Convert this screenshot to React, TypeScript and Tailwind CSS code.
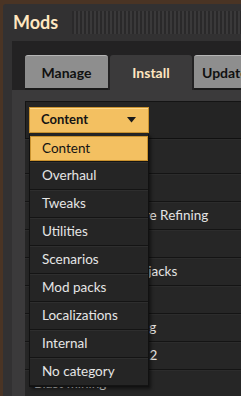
import React from "react";

const K_CATEGORIES = [
  "Content",
  "Overhaul",
  "Tweaks",
  "Utilities",
  "Scenarios",
  "Mod packs",
  "Localizations",
  "Internal",
  "No category",
];

const K_MODS = [
  { name: "Alien Biomes", h: "h-[35px]" },
  { name: "AAI Loaders", h: "h-[28px]" },
  { name: "Angel's Ultimate Ore Refining", h: "h-[28px]" },
  { name: "Bottleneck", h: "h-[28px]" },
  { name: "Bob's Mining Pumpjacks", h: "h-[28px]" },
  { name: "Cursed filters", h: "h-[28px]" },
  { name: "Angel's Deep Mining", h: "h-[28px]" },
  { name: "Space Explorations 2", h: "h-[28px]" },
  { name: "Blast mining", h: "h-[28px]" },
];

function Tab({ label, active, wide }: { label: string; active?: boolean; wide?: boolean }) {
  if (active) {
    return (
      <div className="w-[82px] h-[35px] shrink-0 bg-[#3b3a3b] rounded-t-[3px] flex items-center justify-center pb-[1px] text-[14px] font-bold text-[#ffe6c0]">
        {label}
      </div>
    );
  }
  return (
    <div
      className={`${wide ? "w-[90px] justify-start pl-[8px]" : "w-[83px] justify-center"} h-[33px] shrink-0 bg-[#8e8e8e] rounded-t-[3px] border-t border-[#b5b5b5] shadow-[0_2px_0_#1a1a1a] flex items-center text-[14px] font-bold text-[#111111] whitespace-nowrap`}
    >
      {label}
    </div>
  );
}

export default function App() {
  return (
    <div className="w-[241px] h-[396px] overflow-hidden bg-[#4a3424] pt-[4px] pl-[3px] font-['Lato',sans-serif]">
      <div className="w-[300px] h-full bg-[#323132] rounded-tl-[3px] flex flex-col">
        {/* title bar */}
        <div className="h-[37px] shrink-0 flex items-center pl-[10px] pb-[1px]">
          <span className="text-[18px] leading-none font-bold text-[#ffe6c0]">Mods</span>
          <div className="ml-[14px] flex-1 h-[23px] bg-[repeating-linear-gradient(90deg,#2a292a_0px,#2a292a_2px,#3a393a_2px,#3a393a_4px)]" />
        </div>

        {/* inner frame */}
        <div className="ml-[9px] flex-1 bg-[#232223] flex flex-col">
          <div className="pt-[14px] pl-[13px] flex gap-[2px] items-start">
            <Tab label="Manage" />
            <Tab label="Install" active />
            <Tab label="Updates" wide />
          </div>

          <div className="flex-1 bg-[#3b3a3b] pt-[11px] pl-[13px]">
            <div className="relative h-full bg-[#242424] shadow-[inset_1px_1px_0_#141414]">
              <div className="h-[38px] border-b border-[#101010] pl-[4px] pt-[6px]">
                <div className="w-[120px] h-[26px] bg-[#f3c061] border border-[#c9922f] shadow-[inset_0_1px_0_#ffd98c] flex items-center pl-[11px] pr-[12px] text-[13px] font-bold text-[#141414]">
                  <span className="flex-1">Content</span>
                  <svg width="9" height="6" viewBox="0 0 9 6">
                    <path d="M0 0 H9 L4.5 5.5 Z" fill="#1a1a1a" />
                  </svg>
                </div>
              </div>

              {K_MODS.map((mod, index) => (
                <div
                  key={index}
                  className={`${mod.h} border-b border-[#141414] shadow-[inset_0_1px_0_#2c2c2c] bg-[#262626] flex items-center pl-[9px] text-[13.5px] text-[#e3e3e3] whitespace-nowrap`}
                >
                  {mod.name}
                </div>
              ))}

              {/* category dropdown list */}
              <div className="absolute left-[4px] top-[33px] w-[120px] bg-[#252525] border-x border-b border-[#111111] shadow-[2px_2px_3px_rgba(0,0,0,0.5)]">
                {K_CATEGORIES.map((cat, index) =>
                  index === 0 ? (
                    <div key={index} className="h-[28px] pt-[2px] border-b border-[#141414]">
                      <div className="h-[25px] bg-[#f3c061] border border-[#c9922f] flex items-center pl-[11px] text-[13.5px] text-[#141414]">
                        {cat}
                      </div>
                    </div>
                  ) : (
                    <div
                      key={index}
                      className="h-[28px] border-b border-[#141414] shadow-[inset_0_1px_0_#2e2e2e] flex items-center pl-[12px] text-[13.5px] text-[#e6e6e6]"
                    >
                      {cat}
                    </div>
                  )
                )}
              </div>
            </div>
          </div>
        </div>
      </div>
    </div>
  );
}
